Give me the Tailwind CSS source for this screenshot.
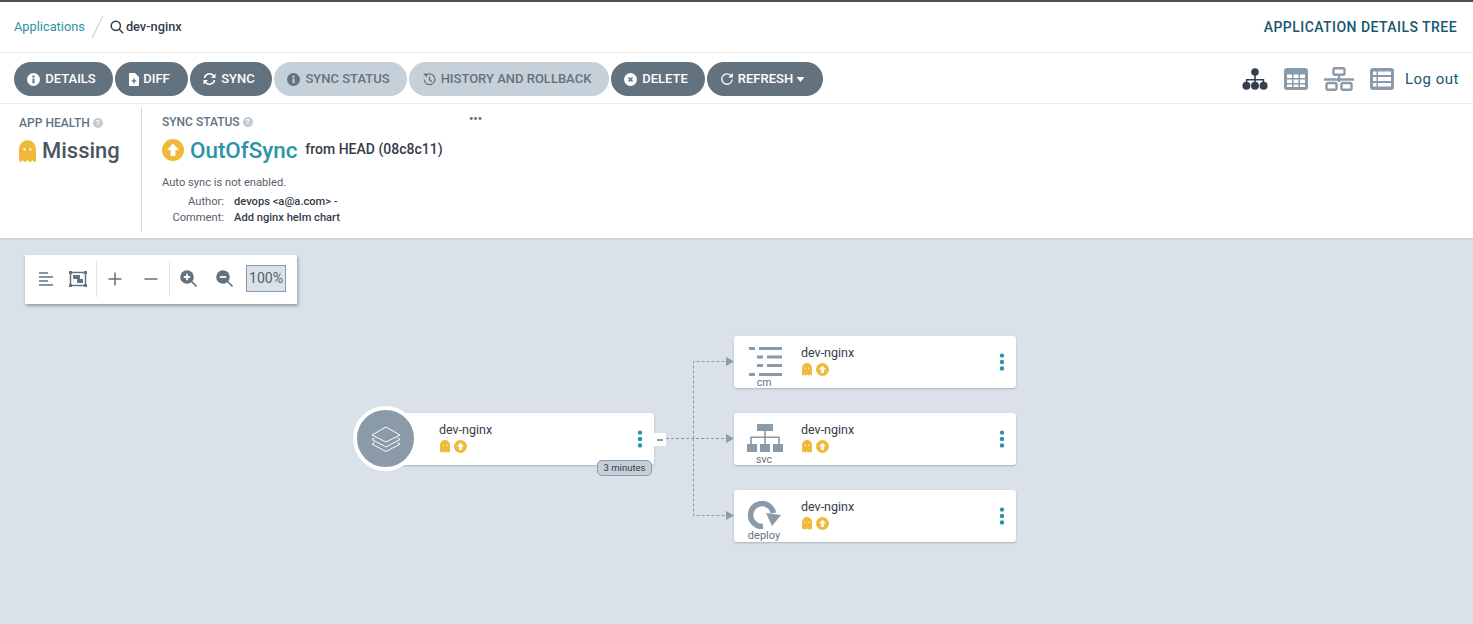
<!DOCTYPE html>
<html lang="en">
<head>
  <meta charset="UTF-8" />
  <title>dev-nginx | Applications</title>
  <script src="https://cdn.jsdelivr.net/npm/@tailwindcss/browser@4"></script>
</head>
<body class="h-[624px] w-[1473px] overflow-hidden bg-[#dae1e8] font-['Roboto',sans-serif] text-[#363c4a]">

<!-- shared icons -->
<svg class="hidden">
  <symbol id="ghost" viewBox="0 0 16 21">
    <path fill="#f0b93a" d="M0 8a8 8 0 0 1 16 0v11l-1.300 1.500-2-1.800-2.300 2-2.400-2-2.400 2-2.300-2-2 1.800L0 19z"/>
    <circle cx="5.300" cy="8.500" r="1.200" fill="#fff" fill-opacity=".8"/>
    <circle cx="10.700" cy="8.500" r="1.200" fill="#fff" fill-opacity=".8"/>
  </symbol>
  <symbol id="sync-up" viewBox="0 0 22 22">
    <circle cx="11" cy="11" r="11" fill="#f0b93a"/>
    <path fill="#fff" d="M11 4.600 17 11h-3.600v6H8.600v-6H5z"/>
  </symbol>
  <symbol id="kebab" viewBox="0 0 6 18">
    <circle cx="3" cy="2.600" r="2.200" fill="#2a93a5"/>
    <circle cx="3" cy="9" r="2.200" fill="#2a93a5"/>
    <circle cx="3" cy="15.400" r="2.200" fill="#2a93a5"/>
  </symbol>
</svg>

<!-- Top bar -->
<header class="h-[53px] border-t-2 border-b border-t-[#4a4f55] border-b-[#e9edf0] bg-white flex items-center justify-between pl-[14px] pr-[16px]">
  <div class="flex items-center">
    <a class="text-[12.8px] text-[#2d93a6]">Applications</a>
    <span class="ml-[12px] mr-[12px] h-[24px] w-px bg-[#c4cdd4] rotate-[26deg]"></span>
    <svg class="w-[14px] h-[14px] mr-[2px]" viewBox="0 0 14 14" fill="none" stroke="#363c4a" stroke-width="1.500"><circle cx="5.800" cy="5.800" r="4.600"/><path d="m9.200 9.200 4 4"/></svg>
    <span class="text-[12.8px] font-medium">dev-nginx</span>
  </div>
  <div class="text-[14px] font-medium text-[#19566f] tracking-[0.45px]">APPLICATION DETAILS TREE</div>
</header>

<!-- Action bar -->
<div class="h-[51px] bg-white border-b border-[#e9edf0] flex items-center justify-between pl-[14px] pr-[14px] pt-[2px]">
  <div class="flex items-center gap-[2px] text-[13px] font-medium">
    <button class="h-[34px] w-[99px] pr-[4px] rounded-full bg-[#63727f] text-white flex items-center justify-center gap-[5px]">
      <svg class="w-[13px] h-[13px]" viewBox="0 0 14 14"><circle cx="7" cy="7" r="7" fill="#fff"/><circle cx="7" cy="3.900" r="1.300" fill="#63727f"/><rect x="5.900" y="6" width="2.200" height="5" fill="#63727f"/></svg>
      DETAILS
    </button>
    <button class="h-[34px] w-[73px] pr-[4px] rounded-full bg-[#63727f] text-white flex items-center justify-center gap-[4px]">
      <svg class="w-[10px] h-[13px]" viewBox="0 0 10 13"><path fill="#fff" d="M0 1a1 1 0 0 1 1-1h5l4 4v8a1 1 0 0 1-1 1H1a1 1 0 0 1-1-1z"/><path stroke="#63727f" stroke-width="1.400" d="M5 5.600v4.600M2.700 7.900h4.600"/></svg>
      DIFF
    </button>
    <button class="h-[34px] w-[82px] pr-[4px] rounded-full bg-[#63727f] text-white flex items-center justify-center gap-[5px]">
      <svg class="w-[13px] h-[12px]" viewBox="0 0 12 12" fill="none" stroke="#fff" stroke-width="1.600"><path d="M1 5a5 5 0 0 1 8.800-2.400L11 4"/><path d="M11 7a5 5 0 0 1-8.800 2.400L1 8"/><path fill="#fff" stroke="none" d="M12 .5V5H7.500zM0 11.500V7h4.500z"/></svg>
      SYNC
    </button>
    <button class="h-[34px] w-[133px] pr-[4px] rounded-full bg-[#c5d0d9] text-[#63727f] flex items-center justify-center gap-[5px]">
      <svg class="w-[13px] h-[13px]" viewBox="0 0 14 14"><circle cx="7" cy="7" r="7" fill="#63727f"/><circle cx="7" cy="3.900" r="1.300" fill="#c5d0d9"/><rect x="5.900" y="6" width="2.200" height="5" fill="#c5d0d9"/></svg>
      SYNC STATUS
    </button>
    <button class="h-[34px] w-[200px] pr-[4px] rounded-full bg-[#c5d0d9] text-[#63727f] flex items-center justify-center gap-[5px]">
      <svg class="w-[13px] h-[13px]" viewBox="0 0 14 14" fill="none" stroke="#63727f" stroke-width="1.400"><path d="M2.400 3.200A5.800 5.800 0 1 1 1.200 7"/><path d="M7 3.800V7.400L9.400 9"/><path fill="#63727f" stroke="none" d="M0 .6h4.200v4.200z"/></svg>
      HISTORY AND ROLLBACK
    </button>
    <button class="h-[34px] w-[94px] pr-[4px] rounded-full bg-[#63727f] text-white flex items-center justify-center gap-[5px]">
      <svg class="w-[13px] h-[13px]" viewBox="0 0 14 14"><circle cx="7" cy="7" r="7" fill="#fff"/><path stroke="#63727f" stroke-width="1.700" d="m4.800 4.800 4.400 4.400M9.200 4.800 4.800 9.200"/></svg>
      DELETE
    </button>
    <button class="h-[34px] w-[116px] pr-[4px] rounded-full bg-[#63727f] text-white flex items-center justify-center gap-[5px]">
      <svg class="w-[12px] h-[12px]" viewBox="0 0 12 12" fill="none" stroke="#fff" stroke-width="1.300"><path d="M10.400 3.200A5.200 5.200 0 1 0 11.200 6.500"/><path fill="#fff" stroke="none" d="M11.800 0v4.500H7.300z"/></svg>
      <span class="flex items-center gap-[3px]">REFRESH<svg class="w-[9px] h-[5px]" viewBox="0 0 8 5"><path fill="#fff" d="M0 0h8L4 5z"/></svg></span>
    </button>
  </div>
  <div class="flex items-center">
    <svg class="w-[28px] h-[22px] mr-[15px]" viewBox="0 0 28 22" fill="#363f4e"><circle cx="14" cy="4" r="3.800"/><path d="M13.200 7h1.600v4h8.400v5h-1.600v-3.400h-6.800V16h-1.600v-3.400H6.400V16H4.800v-5h8.400z"/><circle cx="5.400" cy="17.800" r="4"/><circle cx="14" cy="17.800" r="4"/><circle cx="22.600" cy="17.800" r="4"/></svg>
    <svg class="w-[24px] h-[22px] mr-[16px]" viewBox="0 0 24 22"><rect width="24" height="22" rx="3" fill="#8a9aa8"/><path fill="#fff" d="M3 6.500h5v3.500H3zM9.500 6.500h5v3.500h-5zM16 6.500h5v3.500h-5zM3 11.500h5V15H3zM9.500 11.500h5V15h-5zM16 11.500h5V15h-5zM3 16.500h5V19H3zM9.500 16.500h5V19h-5zM16 16.500h5V19h-5z"/></svg>
    <svg class="w-[30px] h-[24px] mr-[16px]" viewBox="0 0 30 24" fill="none" stroke="#8a9aa8" stroke-width="2.400"><rect x="9.500" y="1.200" width="11" height="6.600" rx="1.500"/><path d="M15 8v7M0 12.500h30"/><rect x="2.500" y="16" width="10" height="6.800" rx="1.500"/><rect x="17.500" y="16" width="10" height="6.800" rx="1.500"/></svg>
    <svg class="w-[24px] h-[22px]" viewBox="0 0 24 22"><rect width="24" height="22" rx="3" fill="#8a9aa8"/><path fill="#fff" d="M3 3.500h3.500V7H3zM8 3.500h13V7H8zM3 9h3.500v4H3zM8 9h13v4H8zM3 15h3.500v3.500H3zM8 15h13v3.500H8z"/></svg>
    <a class="ml-[11px] text-[15px] text-[#19566f] tracking-[0.5px]">Log out</a>
  </div>
</div>

<!-- Status panel -->
<section class="h-[136px] bg-white border-b-2 border-[#cfd6dc] flex pl-[19px] pt-[3px]">
  <div class="w-[123px] h-[125px] border-r border-[#d3d9de] pt-[7px]">
    <div class="flex items-center gap-[3px] text-[12px] font-medium text-[#63727f] tracking-[0.05px]">APP HEALTH
      <span class="w-[10px] h-[10px] rounded-full bg-[#c0cbd3] text-white text-[8px] leading-[10px] text-center font-bold">?</span>
    </div>
    <div class="mt-[5px] flex items-center gap-[6px]">
      <svg class="w-[17px] h-[23px]"><use href="#ghost"/></svg>
      <span class="text-[22px] leading-[28px] font-medium text-[#495763]">Missing</span>
    </div>
  </div>
  <div class="relative pl-[20px] pt-[6px] w-[340px]">
    <div class="flex items-center gap-[3px] text-[12px] font-medium text-[#63727f]">SYNC STATUS
      <span class="w-[10px] h-[10px] rounded-full bg-[#c0cbd3] text-white text-[8px] leading-[10px] text-center font-bold">?</span>
    </div>
    <div class="absolute left-[327px] top-[6px] text-[12px] leading-[12px] font-bold text-[#63727f]">&#8226;&#8226;&#8226;</div>
    <div class="mt-[5px] flex items-center">
      <svg class="w-[22px] h-[22px]"><use href="#sync-up"/></svg>
      <span class="ml-[6px] text-[22.4px] leading-[28px] font-medium text-[#2d93a6]">OutOfSync</span>
      <span class="ml-[8px] text-[14px] font-medium -translate-y-[1px]">from HEAD (08c8c11)</span>
    </div>
    <div class="mt-[11px] text-[11.15px] leading-[16px] text-[#55606c]">Auto sync is not enabled.</div>
    <div class="mt-[3px] grid grid-cols-[62px_1fr] gap-x-[10px] text-[11.15px] leading-[16px] text-[#55606c]">
      <span class="text-right">Author:</span><span class="font-medium text-[#363c4a]">devops &lt;a@a.com&gt; -</span>
      <span class="text-right">Comment:</span><span class="font-medium text-[#363c4a]">Add nginx helm chart</span>
    </div>
  </div>
</section>

<!-- Graph canvas -->
<main class="relative h-[384px]">
  <!-- Zoom toolbar -->
  <div class="absolute left-[25px] top-[15px] w-[272px] h-[49px] bg-white shadow-[1px_2px_3px_rgba(90,110,130,0.6)] flex items-center pl-[14px] pb-[2px]">
    <svg class="w-[14px] h-[14px]" viewBox="0 0 14 14" stroke="#63727f" stroke-width="1.500"><path d="M0 1h9M0 5h14M0 9h9M0 13h14"/></svg>
    <svg class="ml-[16px] w-[18px] h-[16px]" viewBox="0 0 18 16" fill="none" stroke="#63727f" stroke-width="1.500"><rect x="1.500" y="1.500" width="15" height="13"/><path fill="#63727f" stroke="none" d="M4 4h7v4H4zM8 8h6v4H8z"/><path fill="#63727f" stroke="none" d="M0 0h3v3H0zM15 0h3v3h-3zM0 13h3v3H0zM15 13h3v3h-3z"/></svg>
    <span class="ml-[9px] h-[36px] w-px bg-[#dde3e8]"></span>
    <svg class="ml-[11px] w-[14px] h-[14px]" viewBox="0 0 14 14" stroke="#63727f" stroke-width="1.500"><path d="M7 .5v13M.5 7h13"/></svg>
    <svg class="ml-[22px] w-[14px] h-[14px]" viewBox="0 0 14 14" stroke="#63727f" stroke-width="1.500"><path d="M.5 7h13"/></svg>
    <span class="ml-[11px] h-[36px] w-px bg-[#dde3e8]"></span>
    <svg class="ml-[10px] w-[17px] h-[17px]" viewBox="0 0 17 17"><circle cx="7" cy="7" r="6.800" fill="#63727f"/><path stroke="#fff" stroke-width="1.800" d="M7 3.800v6.400M3.800 7h6.400"/><path stroke="#63727f" stroke-width="1.600" d="m11.500 11.500 5 5"/></svg>
    <svg class="ml-[19px] w-[17px] h-[17px]" viewBox="0 0 17 17"><circle cx="7" cy="7" r="6.800" fill="#63727f"/><path stroke="#fff" stroke-width="1.800" d="M3.800 7h6.400"/><path stroke="#63727f" stroke-width="1.600" d="m11.500 11.500 5 5"/></svg>
    <div class="ml-[13px] w-[40px] h-[27px] bg-[#dae1e8] border border-[#8a9aa8] text-center text-[14px] leading-[25px] text-[#55606c]">100%</div>
  </div>

  <!-- Edges -->
  <svg class="absolute left-0 top-[-1px] pointer-events-none" width="1473" height="385" fill="none">
    <path stroke="#8f9aa3" stroke-dasharray="3 2" d="M666 199.500H727M693.500 199.500V122.500H727M693.500 199.500V276.500H727"/>
    <path fill="#8f9aa3" d="M726 118v9l8-4.500zM726 195v9l8-4.500zM726 272v9l8-4.500z"/>
  </svg>

  <!-- App node -->
  <div class="absolute left-[383px] top-[173px] w-[271px] h-[52px] rounded-[3px] bg-white shadow-[0_1px_2px_rgba(90,110,130,0.4)] pl-[56px] pt-[9px]">
    <div class="text-[12.5px] leading-[16px]">dev-nginx</div>
    <div class="flex items-center gap-[4px] mt-[2px] pl-[1px]">
      <svg class="w-[10px] h-[13px]"><use href="#ghost"/></svg>
      <svg class="w-[13px] h-[13px]"><use href="#sync-up"/></svg>
    </div>
    <svg class="absolute right-[11px] top-[17px] w-[6px] h-[18px]"><use href="#kebab"/></svg>
  </div>
  <div class="absolute left-[353px] top-[166px] w-[65px] h-[65px] rounded-full bg-[#8a9aa8] border-[4px] border-white flex items-center justify-center">
    <svg class="w-[30px] h-[30px]" viewBox="0 0 30 30" fill="none" stroke="#fff" stroke-width="1" stroke-linejoin="round"><path d="M15 3 29 11 15 18 1 11z"/><path d="M3.500 14 1 15.500 15 23l14-7.500L26.500 14"/><path d="M3.500 18.500 1 20l14 7.500L29 20l-2.500-1.500"/></svg>
  </div>
  <div class="absolute left-[654px] top-[193px] w-[12px] h-[13px] bg-white flex items-center justify-center">
    <span class="w-[6px] h-[2px] bg-[#8f9aa3]"></span>
  </div>
  <div class="absolute left-[597px] top-[220px] w-[55px] h-[16px] rounded-[5px] bg-[#c5d0d9] border border-[#8a9aa8] text-center text-[9.5px] leading-[14px] text-[#363c4a]">3 minutes</div>

  <!-- cm node -->
  <div class="absolute left-[734px] top-[96px] w-[282px] h-[52px] rounded-[3px] bg-white shadow-[0_1px_2px_rgba(90,110,130,0.4)] pl-[67px] pt-[9px]">
    <svg class="absolute left-[14px] top-[11px] w-[34px] h-[29px]" viewBox="0 0 34 29" fill="#8a9aa8"><path d="M1 0h6v3H1zM11 0h23v3H11zM9 8.500h6v3H9zM19 8.500h15v3H19zM9 17h6v3H9zM19 17h15v3H19zM1 26h6v3H1zM11 26h23v3H11z"/></svg>
    <div class="absolute left-[2px] w-[56px] top-[41px] text-center text-[10.5px] leading-[12px] text-[#63727f]">cm</div>
    <div class="text-[12.5px] leading-[16px]">dev-nginx</div>
    <div class="flex items-center gap-[4px] mt-[2px] pl-[1px]">
      <svg class="w-[10px] h-[13px]"><use href="#ghost"/></svg>
      <svg class="w-[13px] h-[13px]"><use href="#sync-up"/></svg>
    </div>
    <svg class="absolute right-[11px] top-[17px] w-[6px] h-[18px]"><use href="#kebab"/></svg>
  </div>

  <!-- svc node -->
  <div class="absolute left-[734px] top-[173px] w-[282px] h-[52px] rounded-[3px] bg-white shadow-[0_1px_2px_rgba(90,110,130,0.4)] pl-[67px] pt-[9px]">
    <svg class="absolute left-[13px] top-[11px] w-[36px] h-[28px]" viewBox="0 0 36 28" fill="#8a9aa8"><path d="M10 0h16v7H10zM17.200 7h1.600v5.500h14V20h-1.600v-6H18.800v6h-1.600v-6H4.800v6H3.200v-7.500h14z"/><path d="M0 20h10v8H0zM13 20h10v8H13zM26 20h10v8H26z"/></svg>
    <div class="absolute left-[2px] w-[56px] top-[41px] text-center text-[10.5px] leading-[12px] text-[#63727f]">svc</div>
    <div class="text-[12.5px] leading-[16px]">dev-nginx</div>
    <div class="flex items-center gap-[4px] mt-[2px] pl-[1px]">
      <svg class="w-[10px] h-[13px]"><use href="#ghost"/></svg>
      <svg class="w-[13px] h-[13px]"><use href="#sync-up"/></svg>
    </div>
    <svg class="absolute right-[11px] top-[17px] w-[6px] h-[18px]"><use href="#kebab"/></svg>
  </div>

  <!-- deploy node -->
  <div class="absolute left-[734px] top-[250px] w-[282px] h-[52px] rounded-[3px] bg-white shadow-[0_1px_2px_rgba(90,110,130,0.4)] pl-[67px] pt-[9px]">
    <svg class="absolute left-[14px] top-[11px] w-[33px] h-[28px]" viewBox="0 0 33 28" fill="none"><path stroke="#8a9aa8" stroke-width="5.500" d="M15 25.500A11.500 11.500 0 1 1 25.400 12"/><path fill="#8a9aa8" d="M18 12 33 14 24 25z"/></svg>
    <div class="absolute left-[2px] w-[56px] top-[40px] text-center text-[11px] leading-[12px] text-[#63727f]">deploy</div>
    <div class="text-[12.5px] leading-[16px]">dev-nginx</div>
    <div class="flex items-center gap-[4px] mt-[2px] pl-[1px]">
      <svg class="w-[10px] h-[13px]"><use href="#ghost"/></svg>
      <svg class="w-[13px] h-[13px]"><use href="#sync-up"/></svg>
    </div>
    <svg class="absolute right-[11px] top-[17px] w-[6px] h-[18px]"><use href="#kebab"/></svg>
  </div>
</main>

</body>
</html>
